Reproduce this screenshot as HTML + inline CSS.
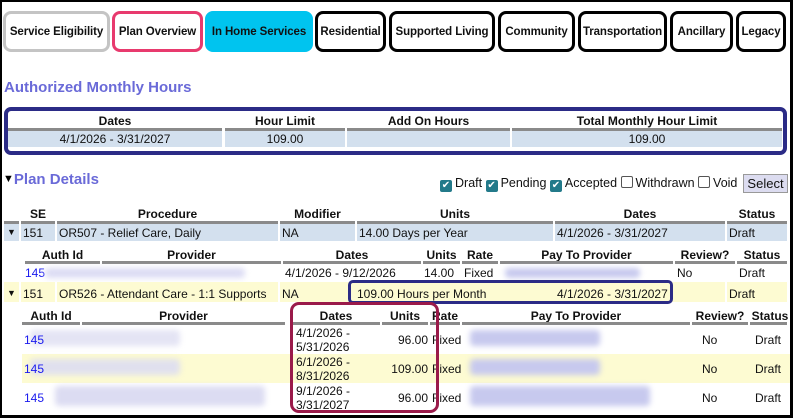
<!DOCTYPE html>
<html><head><style>
*{margin:0;padding:0;box-sizing:border-box}
body{width:793px;height:418px;overflow:hidden;background:#fff;font-family:"Liberation Sans",Arial,sans-serif;font-size:12px;color:#111;position:relative}
.frame{position:absolute;left:0;top:0;width:793px;height:418px;border:2px solid #000;border-right-width:3px;border-bottom-width:3px;z-index:9;pointer-events:none}
.a{position:absolute;white-space:nowrap}
.tab{position:absolute;top:11px;height:41px;border:3px solid #000;border-radius:8px;font-weight:bold;font-size:11.5px;display:flex;align-items:center;justify-content:center;background:#fff;letter-spacing:-0.1px}
.h{position:absolute;font-weight:bold;text-align:center;white-space:nowrap}
.ln{position:absolute;height:3px;background:#8a8a8a}
.row{position:absolute}
.blur{position:absolute;background:#c7c9ee;filter:blur(3px);border-radius:4px}
.lnk{color:#1a1aee}
.cb{display:inline-block;width:12px;height:12px;border-radius:2px;background:#237a8a;color:#fff;font-size:10px;line-height:12px;text-align:center;vertical-align:-1px;margin-right:3px}
.cbe{display:inline-block;width:12px;height:12px;border-radius:2px;border:1px solid #555;background:#fff;vertical-align:-1px;margin-right:3px}
</style></head><body>
<div class="frame"></div>

<div class="tab" style="left:3px;width:107px;border-color:#c4c4c4">Service Eligibility</div>
<div class="tab" style="left:112px;width:91px;border-color:#e83a6e">Plan Overview</div>
<div class="tab" style="left:205px;width:108px;border-color:#00c4ef;background:#00c4ef">In Home Services</div>
<div class="tab" style="left:315px;width:71px">Residential</div>
<div class="tab" style="left:389px;width:106px">Supported Living</div>
<div class="tab" style="left:498px;width:77px">Community</div>
<div class="tab" style="left:578px;width:89px">Transportation</div>
<div class="tab" style="left:670px;width:63px">Ancillary</div>
<div class="tab" style="left:736px;width:50px">Legacy</div>

<div class="a" style="left:4px;top:79px;font-size:15px;font-weight:bold;color:#6a6ad8">Authorized Monthly Hours</div>
<div class="row" style="left:8px;top:130px;width:774px;height:17px;background:#d3e0ee"></div>
<div class="h" style="left:8px;width:214px;top:114px">Dates</div>
<div class="h" style="left:225px;width:120px;top:114px">Hour Limit</div>
<div class="h" style="left:347px;width:163px;top:114px">Add On Hours</div>
<div class="h" style="left:512px;width:270px;top:114px">Total Monthly Hour Limit</div>
<div class="ln" style="left:8px;width:214px;top:128px"></div>
<div class="ln" style="left:225px;width:120px;top:128px"></div>
<div class="ln" style="left:347px;width:163px;top:128px"></div>
<div class="ln" style="left:512px;width:270px;top:128px"></div>
<div class="row" style="left:222px;top:130px;width:3px;height:17px;background:#fff"></div>
<div class="row" style="left:345px;top:130px;width:2px;height:17px;background:#fff"></div>
<div class="row" style="left:510px;top:130px;width:2px;height:17px;background:#fff"></div>
<div class="a" style="left:8px;width:214px;text-align:center;top:132px">4/1/2026 - 3/31/2027</div>
<div class="a" style="left:225px;width:120px;text-align:center;top:132px">109.00</div>
<div class="a" style="left:512px;width:270px;text-align:center;top:132px">109.00</div>
<div class="row" style="left:4px;top:107px;width:783px;height:48px;border:4px solid #2b2b86;border-radius:7px"></div>

<div class="a" style="left:3px;top:171px;font-size:15px;font-weight:bold;color:#6a6ad8"><span style="color:#000;font-size:11px;vertical-align:2px">▼</span>Plan Details</div>
<div class="a" style="left:440px;top:176px;font-size:12.5px"><span class="cb">✔</span>Draft <span class="cb">✔</span>Pending <span class="cb">✔</span>Accepted <span class="cbe"></span>Withdrawn <span class="cbe"></span>Void</div>
<div class="a" style="left:743px;top:174px;width:45px;height:19px;background:#dcdcf0;border:1px solid #999;text-align:center;line-height:17px;font-size:13px">Select</div>

<!-- main header -->
<div class="h" style="left:21px;width:34px;top:207px">SE</div>
<div class="h" style="left:57px;width:221px;top:207px">Procedure</div>
<div class="h" style="left:280px;width:75px;top:207px">Modifier</div>
<div class="h" style="left:357px;width:196px;top:207px">Units</div>
<div class="h" style="left:555px;width:170px;top:207px">Dates</div>
<div class="h" style="left:727px;width:60px;top:207px">Status</div>
<div class="ln" style="left:4px;width:15px;top:221px"></div>
<div class="ln" style="left:21px;width:34px;top:221px"></div>
<div class="ln" style="left:57px;width:221px;top:221px"></div>
<div class="ln" style="left:280px;width:75px;top:221px"></div>
<div class="ln" style="left:357px;width:196px;top:221px"></div>
<div class="ln" style="left:555px;width:170px;top:221px"></div>
<div class="ln" style="left:727px;width:60px;top:221px"></div>
<div class="row" style="left:4px;top:224px;width:783px;height:17px;background:#d3e0ee"></div>
<div class="row" style="left:19px;top:224px;width:2px;height:17px;background:#fff"></div>
<div class="row" style="left:55px;top:224px;width:2px;height:17px;background:#fff"></div>
<div class="row" style="left:278px;top:224px;width:2px;height:17px;background:#fff"></div>
<div class="row" style="left:355px;top:224px;width:2px;height:17px;background:#fff"></div>
<div class="row" style="left:553px;top:224px;width:2px;height:17px;background:#fff"></div>
<div class="row" style="left:725px;top:224px;width:2px;height:17px;background:#fff"></div>
<div class="a" style="left:7px;top:227px;font-size:9px">▼</div>
<div class="a" style="left:23px;top:226px">151</div>
<div class="a" style="left:59px;top:226px">OR507 - Relief Care, Daily</div>
<div class="a" style="left:282px;top:226px">NA</div>
<div class="a" style="left:359px;top:226px">14.00 Days per Year</div>
<div class="a" style="left:557px;top:226px">4/1/2026 - 3/31/2027</div>
<div class="a" style="left:729px;top:226px">Draft</div>

<!-- sub1 -->
<div class="h" style="left:25px;width:75px;top:248px">Auth Id</div>
<div class="h" style="left:102px;width:179px;top:248px">Provider</div>
<div class="h" style="left:283px;width:138px;top:248px">Dates</div>
<div class="h" style="left:423px;width:37px;top:248px">Units</div>
<div class="h" style="left:462px;width:36px;top:248px">Rate</div>
<div class="h" style="left:500px;width:173px;top:248px">Pay To Provider</div>
<div class="h" style="left:675px;width:60px;top:248px">Review?</div>
<div class="h" style="left:737px;width:50px;top:248px">Status</div>
<div class="ln" style="left:25px;width:75px;top:261px"></div>
<div class="ln" style="left:102px;width:179px;top:261px"></div>
<div class="ln" style="left:283px;width:138px;top:261px"></div>
<div class="ln" style="left:423px;width:37px;top:261px"></div>
<div class="ln" style="left:462px;width:36px;top:261px"></div>
<div class="ln" style="left:500px;width:173px;top:261px"></div>
<div class="ln" style="left:675px;width:60px;top:261px"></div>
<div class="ln" style="left:737px;width:50px;top:261px"></div>
<div class="a lnk" style="left:25px;top:266px">145</div>
<div class="blur" style="left:45px;top:268px;width:200px;height:10px;background:#dcdcf4"></div>
<div class="a" style="left:285px;top:266px">4/1/2026 - 9/12/2026</div>
<div class="a" style="left:424px;top:266px">14.00</div>
<div class="a" style="left:464px;top:266px">Fixed</div>
<div class="blur" style="left:505px;top:268px;width:135px;height:10px"></div>
<div class="a" style="left:677px;top:266px">No</div>
<div class="a" style="left:739px;top:266px">Draft</div>

<!-- row2 -->
<div class="row" style="left:4px;top:282px;width:783px;height:20px;background:#fdfbd2"></div>
<div class="row" style="left:19px;top:282px;width:2px;height:20px;background:#fff"></div>
<div class="row" style="left:55px;top:282px;width:2px;height:20px;background:#fff"></div>
<div class="row" style="left:278px;top:282px;width:2px;height:20px;background:#fff"></div>
<div class="row" style="left:725px;top:282px;width:2px;height:20px;background:#fff"></div>
<div class="a" style="left:7px;top:288px;font-size:9px">▼</div>
<div class="a" style="left:23px;top:287px">151</div>
<div class="a" style="left:59px;top:287px">OR526 - Attendant Care - 1:1 Supports</div>
<div class="a" style="left:282px;top:287px">NA</div>
<div class="a" style="left:357px;top:287px">109.00 Hours per Month</div>
<div class="a" style="left:557px;top:287px">4/1/2026 - 3/31/2027</div>
<div class="a" style="left:729px;top:287px">Draft</div>
<div class="row" style="left:348px;top:280px;width:325px;height:24px;border:3px solid #2b2b86;border-radius:5px"></div>

<!-- sub2 -->
<div class="h" style="left:22px;width:58px;top:309px">Auth Id</div>
<div class="h" style="left:82px;width:203px;top:309px">Provider</div>
<div class="h" style="left:292px;width:88px;top:309px">Dates</div>
<div class="h" style="left:382px;width:46px;top:309px">Units</div>
<div class="h" style="left:430px;width:30px;top:309px">Rate</div>
<div class="h" style="left:462px;width:228px;top:309px">Pay To Provider</div>
<div class="h" style="left:692px;width:56px;top:309px">Review?</div>
<div class="h" style="left:750px;width:40px;top:309px">Status</div>
<div class="ln" style="left:22px;width:58px;top:322px"></div>
<div class="ln" style="left:82px;width:203px;top:322px"></div>
<div class="ln" style="left:292px;width:88px;top:322px"></div>
<div class="ln" style="left:382px;width:46px;top:322px"></div>
<div class="ln" style="left:430px;width:30px;top:322px"></div>
<div class="ln" style="left:462px;width:228px;top:322px"></div>
<div class="ln" style="left:692px;width:56px;top:322px"></div>
<div class="ln" style="left:750px;width:37px;top:322px"></div>

<div class="row" style="left:22px;top:354px;width:768px;height:29px;background:#fdfbd2"></div>
<div class="blur" style="left:30px;top:330px;width:150px;height:16px;background:#e4e4f4"></div>
<div class="blur" style="left:30px;top:359px;width:150px;height:16px;background:#e0e0ee"></div>
<div class="blur" style="left:55px;top:386px;width:210px;height:20px;background:#dcdcf2"></div>
<div class="blur" style="left:470px;top:330px;width:130px;height:16px"></div>
<div class="blur" style="left:470px;top:359px;width:130px;height:16px"></div>
<div class="blur" style="left:470px;top:386px;width:180px;height:20px"></div>

<div class="a lnk" style="left:24px;top:333px">145</div>
<div class="a lnk" style="left:24px;top:362px">145</div>
<div class="a lnk" style="left:24px;top:391px">145</div>
<div class="a" style="left:296px;top:326px;line-height:14px">4/1/2026 -<br>5/31/2026</div>
<div class="a" style="left:296px;top:355px;line-height:14px">6/1/2026 -<br>8/31/2026</div>
<div class="a" style="left:296px;top:384px;line-height:14px">9/1/2026 -<br>3/31/2027</div>
<div class="a" style="left:382px;width:46px;text-align:right;top:333px">96.00</div>
<div class="a" style="left:382px;width:46px;text-align:right;top:362px">109.00</div>
<div class="a" style="left:382px;width:46px;text-align:right;top:391px">96.00</div>
<div class="a" style="left:432px;top:333px">Fixed</div>
<div class="a" style="left:432px;top:362px">Fixed</div>
<div class="a" style="left:432px;top:391px">Fixed</div>
<div class="a" style="left:702px;top:333px">No</div>
<div class="a" style="left:702px;top:362px">No</div>
<div class="a" style="left:702px;top:391px">No</div>
<div class="a" style="left:755px;top:333px">Draft</div>
<div class="a" style="left:755px;top:362px">Draft</div>
<div class="a" style="left:755px;top:391px">Draft</div>
<div class="row" style="left:290px;top:302px;width:149px;height:111px;border:3px solid #9a1a4a;border-radius:9px"></div>
</body></html>
